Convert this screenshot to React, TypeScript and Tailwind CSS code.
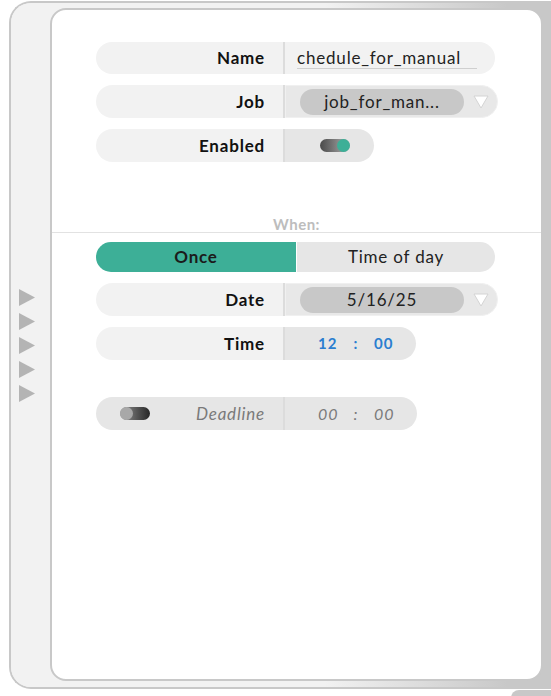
import React from "react";

const FONT = { fontFamily: "Lato, 'Noto Sans', sans-serif" };

function Arrow() {
  return (
    <svg width="16" height="17" viewBox="0 0 16 17">
      <polygon points="0,0 16,8.5 0,17" fill="#b4b4b4" />
    </svg>
  );
}

function DropTriangle() {
  return (
    <svg width="16" height="14" viewBox="0 0 16 14">
      <polygon points="1,1 15,1 8,13" fill="#ffffff" stroke="#d4d4d4" strokeWidth="1" strokeLinejoin="round" />
    </svg>
  );
}

function Label({ children }: { children: React.ReactNode }) {
  return (
    <div className="w-[187px] shrink-0 h-full flex items-center justify-end pr-[18px] text-[17px] tracking-[0.8px] font-bold text-[#111]">
      {children}
    </div>
  );
}

function Divider() {
  return <div className="w-[2px] shrink-0 h-full bg-[#dcdcdc]" />;
}

function Toggle({ on }: { on: boolean }) {
  return on ? (
    <div className="relative w-[30px] h-[13px] rounded-full bg-gradient-to-r from-[#4a4a4a] to-[#b5b5b5]">
      <span className="absolute right-0 top-0 w-[13px] h-[13px] rounded-full bg-[#3daf97]" />
    </div>
  ) : (
    <div className="relative w-[30px] h-[13px] rounded-full bg-gradient-to-r from-[#9a9a9a] to-[#262626]">
      <span className="absolute left-0 top-0 w-[13px] h-[13px] rounded-full bg-[#a8a8a8]" />
    </div>
  );
}

function Clock({ h, m, muted }: { h: string; m: string; muted?: boolean }) {
  const cls = muted
    ? "italic text-[#7a7a7a] text-[16px] tracking-[1px]"
    : "font-bold text-[#2a7ed0] text-[15px] tracking-[1px]";
  return (
    <div className={"flex items-center h-full pl-[33px] " + cls}>
      <span className="w-[20px]">{h}</span>
      <span className="w-[36px] text-center">:</span>
      <span className="w-[22px]">{m}</span>
    </div>
  );
}

export default function App() {
  return (
    <div className="w-[551px] h-[696px] overflow-hidden bg-white" style={FONT}>
      <div
        className="ml-[9px] mt-[1px] w-[542px] h-[688px] flex rounded-l-[22px] border-2 border-r-0 border-[#c8c8c8]"
        style={{ background: "linear-gradient(to right, #f2f2f2 58%, #c8c8c8 92%)" }}
      >
        {/* side arrows */}
        <div className="w-[39px] shrink-0 flex flex-col justify-center gap-[7px] pl-[8px] bg-[#f2f2f2] rounded-l-[20px]">
          <Arrow />
          <Arrow />
          <Arrow />
          <Arrow />
          <Arrow />
        </div>

        {/* card */}
        <div className="mt-[5px] w-[493px] h-[673px] bg-white rounded-[16px] border-2 border-[#c8c8c8] pt-[32px]">
          <div className="pl-[44px] flex flex-col">
            {/* Name */}
            <div className="w-[399px] h-[32px] flex rounded-full bg-[#f2f2f2]">
              <Label>Name</Label>
              <Divider />
              <div className="flex-1 min-w-0 h-full flex items-center pl-[12px] pr-[18px]">
                <div className="w-full min-w-0 h-[22px] overflow-hidden flex justify-end pr-[16px] border-b border-[#cfcfcf] text-[17px] tracking-[0.8px] text-[#222] leading-[22px] whitespace-nowrap">
                  <span className="shrink-0">schedule_for_manual</span>
                </div>
              </div>
            </div>

            {/* Job */}
            <div className="mt-[11px] w-[399px] h-[33px] flex">
              <div className="h-full flex rounded-l-full bg-[#f2f2f2]">
                <Label>Job</Label>
                <Divider />
              </div>
              <div className="flex-1 h-full flex items-center pl-[14px] pr-[8px] rounded-r-full bg-[#e8e8e8] border border-[#f0f0f0]">
                <div className="w-[164px] h-[26px] rounded-full bg-[#c8c8c8] flex items-center justify-center text-[17px] tracking-[0.8px] text-[#222]">
                  job_for_man...
                </div>
                <div className="ml-[9px]">
                  <DropTriangle />
                </div>
              </div>
            </div>

            {/* Enabled */}
            <div className="mt-[11px] h-[33px] flex">
              <div className="h-full flex rounded-l-full bg-[#f2f2f2]">
                <Label>Enabled</Label>
                <Divider />
              </div>
              <div className="w-[89px] h-full flex items-center pl-[35px] rounded-r-full bg-[#e6e6e6]">
                <Toggle on />
              </div>
            </div>

            {/* When */}
            <div className="mt-[54px] -ml-[44px] w-[489px] border-b border-[#e2e2e2] flex justify-center">
              <span className="text-[15px] font-bold tracking-[0.5px] text-[#bdbdbd] leading-[16px]">When:</span>
            </div>

            {/* segmented */}
            <div className="mt-[9px] w-[399px] h-[30px] flex rounded-full overflow-hidden text-[17px] tracking-[0.8px]">
              <div className="w-[200px] h-full bg-[#3daf97] flex items-center justify-center font-bold text-[#1b1b1b]">
                Once
              </div>
              <div className="w-[1px] h-full bg-white" />
              <div className="flex-1 h-full bg-[#e6e6e6] flex items-center justify-center text-[#222]">
                Time of day
              </div>
            </div>

            {/* Date */}
            <div className="mt-[11px] w-[399px] h-[33px] flex">
              <div className="h-full flex rounded-l-full bg-[#f2f2f2]">
                <Label>Date</Label>
                <Divider />
              </div>
              <div className="flex-1 h-full flex items-center pl-[14px] pr-[8px] rounded-r-full bg-[#e8e8e8] border border-[#f0f0f0]">
                <div className="w-[164px] h-[26px] rounded-full bg-[#c8c8c8] flex items-center justify-center text-[17px] tracking-[0.8px] text-[#222]">
                  5/16/25
                </div>
                <div className="ml-[9px]">
                  <DropTriangle />
                </div>
              </div>
            </div>

            {/* Time */}
            <div className="mt-[11px] h-[33px] flex">
              <div className="h-full flex rounded-l-full bg-[#f2f2f2]">
                <Label>Time</Label>
                <Divider />
              </div>
              <div className="w-[131px] h-full rounded-r-full bg-[#e6e6e6]">
                <Clock h="12" m="00" />
              </div>
            </div>

            {/* Deadline */}
            <div className="mt-[37px] w-[321px] h-[33px] flex rounded-full bg-[#e6e6e6]">
              <div className="w-[187px] h-full flex items-center pl-[24px]">
                <Toggle on={false} />
                <span className="flex-1 text-right pr-[18px] italic text-[17px] tracking-[0.8px] text-[#7a7a7a]">Deadline</span>
              </div>
              <Divider />
              <div className="flex-1 h-full">
                <Clock h="00" m="00" muted />
              </div>
            </div>
          </div>
        </div>
      </div>
      <div className="ml-auto mt-[1px] w-[40px] h-[8px] rounded-tl-[8px] bg-[#c8c8c8]" />
    </div>
  );
}
